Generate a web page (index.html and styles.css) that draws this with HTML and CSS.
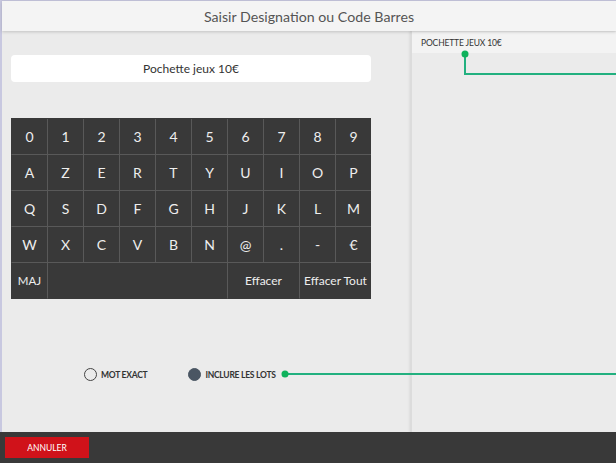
FILE: index.html
```html
<!DOCTYPE html>
<html>
<head>
<meta charset="utf-8">
<link rel="stylesheet" href="styles.css">
</head>
<body>
<div class="app">
  <header class="title">Saisir Designation ou Code Barres</header>
  <main class="content">
    <section class="left">
      <div class="search">Pochette jeux 10€</div>
      <div class="keyboard">
        <div class="key">0</div><div class="key">1</div><div class="key">2</div><div class="key">3</div><div class="key">4</div><div class="key">5</div><div class="key">6</div><div class="key">7</div><div class="key">8</div><div class="key">9</div>
        <div class="key">A</div><div class="key">Z</div><div class="key">E</div><div class="key">R</div><div class="key">T</div><div class="key">Y</div><div class="key">U</div><div class="key">I</div><div class="key">O</div><div class="key">P</div>
        <div class="key">Q</div><div class="key">S</div><div class="key">D</div><div class="key">F</div><div class="key">G</div><div class="key">H</div><div class="key">J</div><div class="key">K</div><div class="key">L</div><div class="key">M</div>
        <div class="key">W</div><div class="key">X</div><div class="key">C</div><div class="key">V</div><div class="key">B</div><div class="key">N</div><div class="key">@</div><div class="key">.</div><div class="key">-</div><div class="key">€</div>
        <div class="key small">MAJ</div><div class="key space"></div><div class="key wide">Effacer</div><div class="key wide">Effacer Tout</div>
      </div>
      <div class="options">
        <label class="opt"><span class="radio"></span>MOT EXACT</label>
        <label class="opt"><span class="radio on"></span>INCLURE LES LOTS</label>
      </div>
    </section>
    <section class="right">
      <div class="result">POCHETTE JEUX 10€</div>
    </section>
    <svg class="links" width="616" height="463" viewBox="0 0 616 463">
      <path d="M465 54 V74 H616" fill="none" stroke="#22b07f" stroke-width="2"/>
      <circle cx="465" cy="54" r="3.5" fill="#0fb25c"/>
      <path d="M285 374 H616" fill="none" stroke="#22b07f" stroke-width="2"/>
      <circle cx="285" cy="374" r="3.5" fill="#0fb25c"/>
    </svg>
  </main>
  <footer class="bar">
    <button class="cancel">ANNULER</button>
  </footer>
</div>
</body>
</html>
```
FILE: styles.css
```css
* { box-sizing: border-box; }
html, body { margin: 0; padding: 0; }
body {
  width: 616px;
  height: 463px;
  overflow: hidden;
  font-family: Lato, "Liberation Sans", sans-serif;
  background: #ebebeb;
}
.app {
  width: 616px;
  height: 463px;
  display: flex;
  flex-direction: column;
  border-top: 1px solid #c4c4dc;
  border-left: 2px solid #c8c8e0;
  position: relative;
}
.title {
  height: 30px;
  flex: none;
  background: #f4f4f4;
  color: #555;
  font-size: 14.2px;
  display: flex;
  align-items: center;
  justify-content: center;
  box-shadow: 0 1px 3px rgba(0,0,0,0.18);
  position: relative;
  z-index: 2;
}
.content {
  flex: 1;
  display: flex;
}
.left {
  width: 408px;
  flex: none;
  padding: 24px 0 0 9px;
  display: flex;
  flex-direction: column;
}
.search {
  width: 360px;
  height: 27px;
  background: #fff;
  border-radius: 4px;
  display: flex;
  align-items: center;
  justify-content: center;
  font-size: 12px;
  color: #333;
}
.keyboard {
  margin-top: 36px;
  width: 360px;
  display: grid;
  grid-template-columns: repeat(10, 1fr);
  grid-auto-rows: 36px;
  background: #393939;
  padding-top: 1px;
}
.key {
  border-left: 1px solid #595959;
  border-bottom: 1px solid #595959;
  color: #eee;
  font-size: 14px;
  display: flex;
  align-items: center;
  justify-content: center;
}
.keyboard .key:nth-child(10n+1) { border-left-color: #393939; }
.keyboard .key:nth-last-child(-n+4) { border-bottom-color: #393939; }
.key.small { font-size: 11.5px; border-left-color: #393939; }
.key.space { grid-column: span 5; }
.key.wide { grid-column: span 2; font-size: 12px; }
.options {
  margin-top: 69px;
  padding-left: 73px;
  display: flex;
  gap: 41px;
}
.opt {
  display: flex;
  align-items: center;
  gap: 4px;
  font-size: 8.5px;
  font-weight: bold;
  color: #333;
  letter-spacing: -0.25px;
}
.radio {
  width: 13px;
  height: 13px;
  border-radius: 50%;
  border: 1.5px solid #444;
  background: transparent;
}
.radio.on {
  background: #4a5663;
  border-color: #4a5663;
}
.right {
  flex: 1;
  border-left: 2px solid #dcdcdc;
  box-shadow: -1px 0 2px rgba(0,0,0,0.06);
  padding-top: 1px;
}
.result {
  height: 21px;
  background: #f3f3f3;
  font-size: 8.5px;
  color: #333;
  padding: 6px 0 0 9px;
  letter-spacing: -0.15px;
}
.links {
  position: absolute;
  left: -2px;
  top: -1px;
  pointer-events: none;
}
.bar {
  height: 31px;
  flex: none;
  background: #393939;
  padding: 5px 0 0 5px;
  margin-left: -2px;
}
.cancel {
  width: 84px;
  height: 21px;
  background: #d0121a;
  color: #fff;
  border: none;
  font-family: Lato, "Liberation Sans", sans-serif;
  font-size: 8.5px;
  padding: 0;
  display: block;
}
```
